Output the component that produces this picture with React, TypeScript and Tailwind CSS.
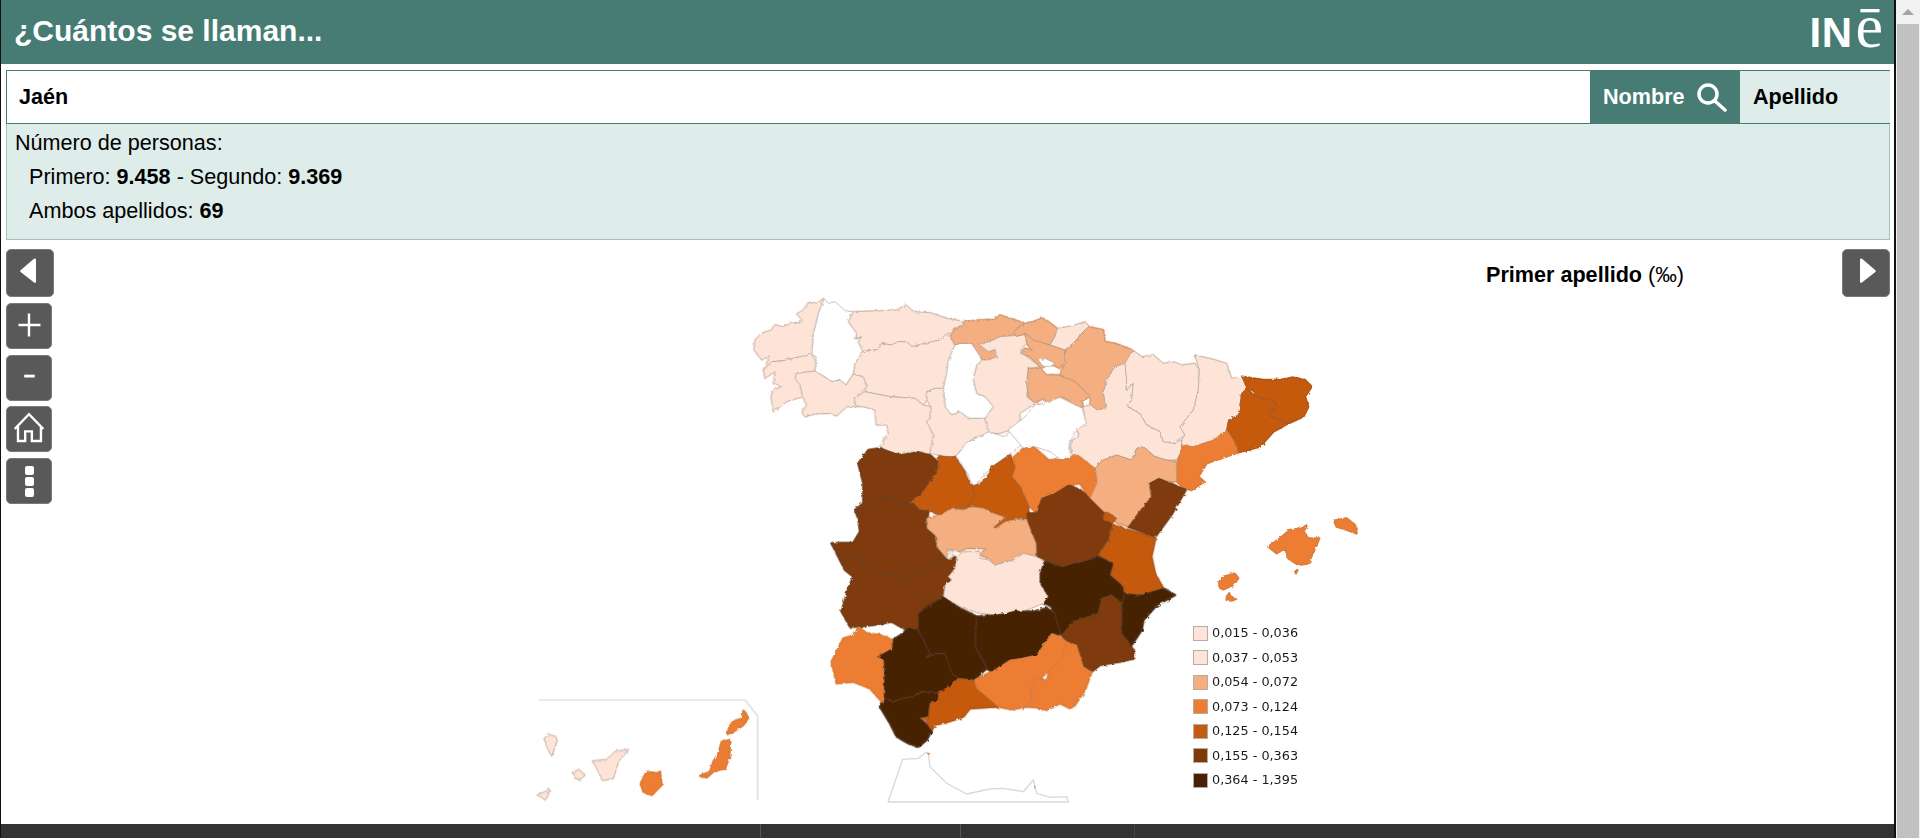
const C1 = "#fde4d6";
const C3 = "#f4ae80";
const C4 = "#ed7d31";
const C5 = "#c55a11";
const C6 = "#7f3a0b";
const C7 = "#472006";
const W = "#ffffff";

// border colour for each fill, dark provinces only show a faint line
const edge: Record<string, string> = {
  [C1]: "#a8a29e",
  [C3]: "#a8917f",
  [C4]: "#b98256",
  [C5]: "#8d5a34",
  [C6]: "#5f4632",
  [C7]: "#5c4a3c",
  [W]: "#a8a29e",
};

// provinces traced in 3x px, each block has its own origin
const mapGroups: { x: number; y: number; shapes: [string, string][] }[] = [
  {
    x: 660,
    y: 0,
    shapes: [
      [W, "222,25 235,40 255,35 285,62 310,65 295,95 320,130 315,150 335,140 325,155 338,185 325,205 315,220 310,250 288,285 270,270 245,275 215,255 195,245 198,200 185,193 190,130 205,70"],
      [C1, "222,25 200,40 175,38 160,60 140,72 155,88 150,100 130,97 100,110 72,105 65,120 35,130 15,150 12,180 35,210 60,200 40,240 65,215 100,212 130,205 185,193 190,130 205,70"],
      [C1, "185,193 198,215 195,243 140,250 135,265 150,285 158,320 110,335 70,365 63,320 70,300 95,290 70,280 75,245 45,265 40,240 65,215 100,212 130,205"],
      [C1, "195,243 215,255 245,275 270,270 288,285 310,252 340,260 350,290 335,305 312,325 318,350 290,350 260,378 240,370 195,372 165,380 155,370 170,345 158,320 150,285 135,265 140,250"],
      [C1, "310,65 400,62 440,60 468,45 490,65 540,68 590,85 645,95 600,130 590,130 570,150 525,160 485,170 470,155 445,155 425,165 395,160 385,178 338,185 325,155 335,140 318,145 320,130 295,95"],
      [C1, "338,185 385,178 395,160 425,165 445,155 470,155 485,170 525,160 570,150 590,130 600,140 615,165 595,210 590,250 580,295 555,295 530,305 530,330 520,345 495,325 420,320 345,305 350,290 340,260 310,252 315,220 325,205"],
      [W, "615,165 630,160 665,160 685,190 695,210 680,225 670,270 680,310 705,320 730,350 705,385 655,385 630,365 605,375 585,350 580,295 590,250 595,210"],
      [C1, "345,305 420,320 495,325 520,345 543,350 540,385 530,395 550,435 540,490 520,492 490,485 460,490 430,490 390,470 415,430 410,405 378,405 375,360 340,350 318,350 312,325"],
      [C1, "530,305 555,295 580,295 585,350 605,375 630,365 655,385 705,385 717,430 680,440 650,460 620,495 598,505 570,495 540,490 550,435 530,395 540,385 543,350 530,330"],
      [C3, "645,95 690,90 735,88 750,75 780,85 825,100 800,115 790,135 750,140 730,150 690,165 715,185 735,178 740,200 715,210 695,210 685,190 665,160 630,160 615,165 600,140 610,125"],
      [C1, "695,210 715,210 740,200 735,178 715,185 690,165 730,150 750,140 825,135 830,160 810,180 830,200 870,230 835,235 830,320 855,340 810,370 810,400 780,420 750,430 717,430 705,385 730,350 705,320 680,310 670,270 680,225"],
    ],
  },
  {
    x: 1410,
    y: 30,
    shapes: [
      [C3, "75,70 100,65 125,55 145,65 172,85 165,110 150,135 130,130 100,120 75,100 50,110 40,95 55,85"],
      [C1, "172,85 215,78 255,65 268,80 245,100 225,125 195,150 150,135 165,110"],
      [C3, "75,100 100,120 150,135 195,150 195,190 180,205 150,190 125,205 90,170 60,160 75,145 95,150 80,130"],
      [W, "115,180 135,175 165,190 150,200 125,195"],
      [C3, "265,80 310,90 315,125 345,130 398,150 375,190 345,200 320,240 310,280 320,320 295,332 270,315 272,290 250,270 225,245 180,225 195,190 195,150 225,125 245,100"],
      [C3, "85,205 120,205 140,225 175,225 225,245 250,270 272,290 245,300 250,320 225,325 205,300 185,290 150,315 130,295 105,310 85,290 80,250"],
      [C1, "345,200 375,190 380,240 378,270 400,250 395,300 380,318 420,340 440,375 480,395 490,425 520,430 545,420 545,450 530,480 500,480 465,470 430,440 410,445 395,480 350,465 310,480 285,505 215,460 210,425 235,410 232,385 255,365 250,320 270,315 295,332 320,320 310,280 320,240"],
      [C1, "398,150 425,170 460,165 490,190 520,185 545,195 585,190 598,210 595,270 580,330 540,380 555,405 520,430 490,425 480,395 440,375 420,340 380,318 395,300 400,250 378,270 380,240 375,190"],
      [C1, "585,165 640,178 680,190 695,235 735,230 740,265 725,280 715,345 685,360 680,390 640,420 580,440 545,435 545,420 555,405 540,380 580,330 595,270 598,210"],
      [C5, "725,230 760,235 790,240 840,240 880,232 915,240 935,260 915,290 925,320 910,350 865,370 840,360 810,350 805,340 825,325 825,305 790,295 765,290 760,270 740,265"],
      [C5, "725,280 740,265 765,290 790,295 825,305 825,325 805,340 810,350 840,360 865,370 820,395 780,440 715,457 700,420 680,390 685,360 715,345"],
      [C4, "680,390 700,420 715,457 650,480 620,490 595,530 612,545 575,570 555,565 530,545 530,490 545,450 545,435 580,440 640,420"],
      [C3, "285,505 310,480 350,465 395,480 410,445 430,440 465,470 500,480 530,485 530,545 510,545 475,535 450,550 465,590 445,620 415,650 390,680 350,670 340,645 310,635 260,595 290,545"],
    ],
  },
  {
    x: 870,
    y: 450,
    shapes: [
      [W, "409,50 437,10 506,-25 552,-10 575,-30 604,15 564,45 512,85 460,140 437,90"],
      [W, "564,-30 615,-70 644,-105 678,-110 719,-128 787,-95 799,-50 770,-30 747,10 753,60 724,60 690,35 644,20 610,25"],
      [C6, "988,130 1017,115 1097,150 1057,220 1006,290 977,280 925,260 954,220 994,170"],
      [C6, "115,70 145,30 180,25 245,45 300,35 330,45 358,70 350,100 330,125 305,160 278,180 250,200 215,170 190,170 160,200 105,210 130,190 130,130"],
      [C6, "105,210 160,200 190,170 215,170 250,200 278,190 300,210 325,210 320,265 350,290 350,320 380,355 360,360 325,380 290,405 240,410 195,405 130,385 130,355 95,350 70,370 35,310 100,308 120,275 115,235"],
      [C6, "35,310 70,370 95,350 130,355 130,385 195,405 240,410 290,405 325,380 360,360 380,355 410,350 405,385 385,410 395,420 375,435 370,470 330,490 295,520 300,560 280,570 250,565 215,545 160,555 110,560 90,560 65,515 85,445 100,410 75,390"],
      [C5, "358,48 405,50 430,90 450,135 465,155 450,190 425,210 395,205 360,225 325,210 300,210 278,180 305,160 330,125 350,100"],
      [C4, "610,25 640,20 685,60 720,60 775,45 825,85 830,130 810,175 780,130 745,135 705,160 665,175 650,220 625,195 600,140 575,110 583,50"],
      [C5, "570,45 585,80 575,110 600,140 625,195 625,235 590,238 555,245 528,265 520,262 555,232 520,220 490,205 455,200 430,210 450,190 465,160 455,138 485,130 510,100 515,80"],
      [C6, "620,220 650,220 665,175 705,160 745,135 780,150 810,175 850,215 875,250 865,300 835,345 790,365 760,370 730,380 690,365 650,350 648,310 625,260"],
      [C5, "850,225 860,215 890,235 875,250 850,240"],
      [C3, "320,235 360,225 395,205 430,210 455,200 490,205 520,220 555,232 520,262 528,265 555,245 590,238 620,240 648,310 650,350 610,340 580,360 525,375 505,355 480,345 497,325 480,325 440,325 420,335 405,330 385,328 380,355 350,320 350,290 322,265"],
      [C1, "380,355 385,330 405,330 395,355"],
      [C1, "410,350 430,335 480,335 480,355 505,360 525,375 580,360 610,340 650,350 672,365 660,400 660,430 685,470 670,490 620,510 570,520 530,525 480,520 420,500 370,470 375,435 395,420 385,410 405,385"],
      [C5, "880,255 925,270 1006,295 994,350 1005,400 1029,445 960,465 945,470 915,460 905,435 870,405 880,370 835,345 865,300"],
    ],
  },
  {
    x: 870,
    y: 900,
    shapes: [
      [C7, "672,-85 730,-70 760,-80 790,-85 835,-100 880,-80 870,-45 905,-15 915,10 905,40 875,15 845,25 835,70 805,80 760,95 725,135 700,125 712,100 695,50 670,40 685,20 660,-20 660,-50"],
      [C6, "725,135 760,95 805,80 835,70 845,25 875,15 905,40 905,100 905,130 940,180 942,205 900,215 840,225 815,245 790,230 770,165 745,160"],
      [C7, "945,20 1029,-5 1065,15 1010,45 970,90 965,120 935,165 905,130 905,40 915,10 960,15"],
      [C7, "470,80 520,75 560,70 585,62 640,65 680,55 705,70 712,100 725,135 695,130 650,195 605,205 570,210 515,245 500,235 480,195 465,170"],
      [C7, "370,20 420,55 470,80 465,170 480,195 500,235 460,270 415,265 395,250 375,190 345,192 320,205 330,190 310,150 295,120 295,70"],
      [C7, "295,120 310,150 330,190 318,205 345,192 375,190 395,250 415,265 385,290 355,310 310,305 280,320 250,325 220,335 190,325 192,250 190,210 170,200 215,175 218,150 250,130 265,112"],
      [C7, "190,325 220,335 250,325 280,320 310,305 355,310 355,330 330,340 325,380 300,385 335,420 320,450 295,470 265,460 230,440 210,400 180,350"],
      [C5, "415,265 460,270 470,295 500,320 535,350 450,355 430,380 385,395 345,405 335,420 315,385 300,385 325,380 330,340 355,330 355,310 385,290"],
      [C4, "115,110 140,130 180,135 218,150 215,175 170,200 190,210 192,250 190,340 150,295 100,275 50,280 35,215 70,145 105,135"],
      [C4, "695,130 740,155 725,205 690,240 660,265 680,272 650,265 635,290 635,330 620,350 575,358 535,350 500,320 470,295 465,270 515,245 570,210 605,205 650,195"],
      [C4, "740,155 770,165 790,230 815,245 795,300 765,345 750,355 720,340 680,360 650,352 620,350 635,330 635,290 650,265 680,272 690,240 725,205"],
    ],
  },
  {
    x: 1980,
    y: 630,
    shapes: [
      [C4, "235,140 270,115 300,90 335,85 352,75 340,95 355,115 388,115 375,145 355,190 325,195 295,175 285,145 260,160"],
      [C4, "432,62 470,55 495,75 500,100 470,90 440,80"],
      [C4, "88,245 100,230 135,222 145,235 130,255 100,268 88,262"],
      [C4, "110,290 118,280 120,290 138,297 125,302 110,300"],
      [C4, "315,212 322,210 318,220"],
    ],
  },
  {
    x: 0,
    y: 1200,
    shapes: [
      [C4, "640,62 648,70 653,85 640,105 610,125 592,132 600,105 615,92 638,85"],
      [C4, "575,155 600,150 598,200 585,235 550,245 530,262 510,258 540,245 550,215 565,190"],
      [C4, "350,245 380,250 390,245 395,285 365,315 340,305 332,280"],
      [C1, "187,213 230,208 255,185 295,178 265,215 250,265 218,272 200,235"],
      [C1, "130,250 145,238 165,255 150,268 135,265"],
      [C1, "43,145 55,133 78,140 80,155 65,198 50,170"],
      [C1, "22,315 45,305 58,298 55,315 45,330 35,322"],
    ],
  },
];

const legend: [string, string][] = [
  [C1, "0,015 - 0,036"],
  [C1, "0,037 - 0,053"],
  [C3, "0,054 - 0,072"],
  [C4, "0,073 - 0,124"],
  [C5, "0,125 - 0,154"],
  [C6, "0,155 - 0,363"],
  [C7, "0,364 - 1,395"],
];

const btn = "flex items-center justify-center rounded-[5px] bg-[#595959] border border-[#7a7a7a]";

const SpainMap = () => (
  <svg viewBox="0 0 2700 1560" className="absolute left-[476px] top-[41px] h-[520px] w-[900px]">
    <defs>
      <filter id="rough" x="0" y="0" width="2700" height="1560" filterUnits="userSpaceOnUse">
        <feTurbulence type="fractalNoise" baseFrequency="0.09" numOctaves="2" seed="4" />
        <feDisplacementMap in="SourceGraphic" scale="9" />
      </filter>
    </defs>
    <polyline points="27,1230 645,1230 683,1278 683,1530" fill="none" stroke="#e2e2e2" strokeWidth="5" />
    <polyline
      transform="translate(870 900)"
      points="204,636 248,508 295,505 318,487 325,490 330,530 380,580 440,612 510,597 550,595 610,605 640,570 650,610 690,622 740,620 745,636 204,636"
      fill="none"
      stroke="#d9d9d9"
      strokeWidth="4"
    />
    {/* ceuta and melilla */}
    <g transform="translate(870 900)" fill={C4}>
      <polygon points="320,489 333,490 325,495" />
      <polygon points="642,585 648,592 644,596" />
    </g>
    <g filter="url(#rough)">
      {/* first pass closes the slivers between neighbouring provinces */}
      {mapGroups.map((g) => (
        <g key={g.x + "-" + g.y} transform={`translate(${g.x} ${g.y})`}>
          {g.shapes
            .filter(([fill]) => fill !== W)
            .map(([fill, pts]) => (
              <polygon key={pts} points={pts} fill={fill} stroke={fill} strokeWidth="7" strokeLinejoin="round" />
            ))}
        </g>
      ))}
      {mapGroups.map((g) => (
        <g key={g.x + "-" + g.y} transform={`translate(${g.x} ${g.y})`}>
          {g.shapes.map(([fill, pts]) => (
            <polygon key={pts} points={pts} fill={fill} stroke={edge[fill]} strokeWidth="2" strokeLinejoin="round" />
          ))}
        </g>
      ))}
    </g>
  </svg>
);

export default function App() {
  return (
    <div className="flex h-[838px] w-[1920px] overflow-hidden bg-white font-['Liberation_Sans',Arial,sans-serif] text-black">
      <div className="w-px shrink-0 bg-[#111]" />

      <main className="flex min-w-0 flex-1 flex-col">
        <header className="flex h-[64px] shrink-0 items-center justify-between bg-[#467c74] pl-[13px] pr-[11px]">
          <h1 className="mb-[4px] text-[30px] font-bold text-white">¿Cuántos se llaman...</h1>
          <div className="mb-[6px] flex items-baseline text-white">
            <span className="text-[42px] font-bold leading-[56px] tracking-[0.5px]">IN</span>
            <span className="ml-[3px] font-['Liberation_Serif',serif] text-[62px] leading-[56px]">ē</span>
          </div>
        </header>

        <section className="mt-[6px] ml-[5px] mr-[4px] shrink-0">
          <div className="flex h-[54px] border-y border-l border-[#467c74] pt-[1px] text-[21.6px] font-bold">
            <div className="flex flex-1 items-center pl-[12px]">Jaén</div>
            <div className="-mt-[1px] flex w-[150px] items-center bg-[#467c74] pl-[13px] text-white">
              Nombre
              <svg viewBox="0 0 30 30" className="ml-[12px] h-[30px] w-[30px]" fill="none" stroke="#fff" strokeWidth="3.5">
                <circle cx="11" cy="12" r="9" />
                <path d="M18 19 L28 28" strokeLinecap="round" />
              </svg>
            </div>
            <div className="-mt-[1px] flex w-[150px] items-center bg-[#deecea] pl-[13px]">Apellido</div>
          </div>
          <div className="h-[116px] border border-t-0 border-[#a9bfbb] bg-[#deecea] pl-[8px] pt-[2px] text-[21.6px] leading-[34px]">
            <p>Número de personas:</p>
            <p className="pl-[14px]">
              Primero: <b>9.458</b> - Segundo: <b>9.369</b>
            </p>
            <p className="pl-[14px]">
              Ambos apellidos: <b>69</b>
            </p>
          </div>
        </section>

        <section className="flex min-h-0 flex-1 pl-[5px] pr-[4px] pt-[9px]">
          <div className="flex w-[48px] shrink-0 flex-col">
            <button className={`${btn} h-[48px] w-[48px]`}>
              <svg viewBox="0 0 48 48" className="h-[48px] w-[48px]" fill="#fff" stroke="#fff" strokeWidth="2.5" strokeLinejoin="round">
                <path d="M29 10 L15 22 L29 33 Z" />
              </svg>
            </button>
            <button className={`${btn} mt-[6px] h-[46px] w-[46px]`}>
              <svg viewBox="0 0 46 46" className="h-[46px] w-[46px]" stroke="#fff" strokeWidth="2.5">
                <path d="M12 22 H35 M23 10 V34" />
              </svg>
            </button>
            <button className={`${btn} mt-[6px] h-[46px] w-[46px]`}>
              <svg viewBox="0 0 46 46" className="h-[46px] w-[46px]" stroke="#fff" strokeWidth="3">
                <path d="M18 21 H29" />
              </svg>
            </button>
            <button className={`${btn} mt-[5px] h-[46px] w-[46px]`}>
              <svg viewBox="0 0 46 46" className="h-[46px] w-[46px]" fill="none" stroke="#fff" strokeWidth="2.5">
                <path d="M8 23 L23 7.5 L38 23 M11.5 20 V35.5 H19 V25.5 H26 V35.5 H35.5 V20" />
              </svg>
            </button>
            <button className={`${btn} mt-[6px] h-[46px] w-[46px] flex-col gap-[2px]`}>
              <span className="h-[9px] w-[9px] rounded-[2px] bg-white" />
              <span className="h-[9px] w-[9px] rounded-[2px] bg-white" />
              <span className="h-[9px] w-[9px] rounded-[2px] bg-white" />
            </button>
          </div>

          <div className="relative min-w-0 flex-1">
            <SpainMap />
            <h2 className="absolute left-[1432px] top-[14px] text-[21.6px] font-bold leading-[24px]">
              Primer apellido <span className="font-normal">(‰)</span>
            </h2>
            <ul className="absolute left-[1139px] top-[372px] flex flex-col font-['DejaVu_Sans',sans-serif] text-[12.8px] leading-[24.5px] text-[#1a1a1a]">
              {legend.map(([color, label]) => (
                <li key={label} className="flex items-center gap-[4px]">
                  <span className="h-[15px] w-[15px] border border-[#b5aca6]" style={{ backgroundColor: color }} />
                  {label}
                </li>
              ))}
            </ul>
          </div>

          <button className={`${btn} h-[48px] w-[48px] shrink-0`}>
            <svg viewBox="0 0 48 48" className="h-[48px] w-[48px]" fill="#fff" stroke="#fff" strokeWidth="2.5" strokeLinejoin="round">
              <path d="M19 10 L33 22 L19 33 Z" />
            </svg>
          </button>
        </section>

        <footer className="flex h-[14px] shrink-0 bg-[#333333]">
          <div className="w-[760px] border-r border-[#555]" />
          <div className="w-[200px] border-r border-[#555]" />
          <div className="w-[174px] border-r border-[#444]" />
        </footer>
      </main>

      <div className="w-[2px] shrink-0 bg-[#111]" />

      <div className="flex w-[24px] shrink-0 flex-col bg-[#f1f1f1]">
        <div className="flex h-[24px] items-center justify-center">
          <span className="h-0 w-0 border-x-[6px] border-b-[6px] border-x-transparent border-b-[#a3a3a3]" />
        </div>
        <div className="mx-[1px] flex-1 bg-[#c1c1c1]" />
      </div>
    </div>
  );
}
